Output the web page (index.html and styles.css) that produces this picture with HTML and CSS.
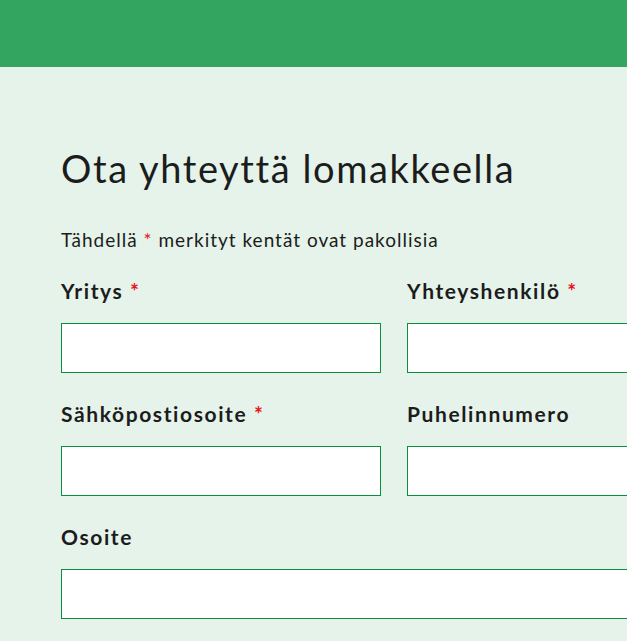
FILE: index.html
```html
<!DOCTYPE html>
<html lang="fi">
<head>
  <meta charset="UTF-8" />
  <meta name="viewport" content="width=device-width, initial-scale=1.0"/>
  <title>Ota yhteyttä</title>
  <link rel="stylesheet" href="styles.css">
</head>
<body>
  <header class="topbar"></header>

  <main class="contact">
    <h1 class="contact-title">Ota yhteyttä lomakkeella</h1>
    <p class="contact-note">Tähdellä <span class="req">*</span> merkityt kentät ovat pakollisia</p>

    <form class="contact-form">
      <div class="field">
        <label for="company">Yritys <span class="req">*</span></label>
        <input type="text" id="company">
      </div>
      <div class="field">
        <label for="person">Yhteyshenkilö <span class="req">*</span></label>
        <input type="text" id="person">
      </div>
      <div class="field">
        <label for="email">Sähköpostiosoite <span class="req">*</span></label>
        <input type="email" id="email">
      </div>
      <div class="field">
        <label for="phone">Puhelinnumero</label>
        <input type="tel" id="phone">
      </div>
      <div class="field field-wide">
        <label for="address">Osoite</label>
        <input type="text" id="address">
      </div>
    </form>
  </main>
</body>
</html>
```

FILE: styles.css
```css
body {
  margin: 0;
  background-color: #e5f3ea;
  color: #1c1c1c;
  font-family: 'Lato', 'Noto Sans', sans-serif;
  overflow: hidden;
}

.topbar {
  height: 67px;
  background-color: #33a561;
}

.contact {
  padding: 78px 0 0 61px;
  width: 666px;
}

.contact-title {
  margin: 0;
  font-size: 38px;
  line-height: 46px;
  font-weight: 400;
  letter-spacing: 1.6px;
}

.contact-note {
  margin: 37px 0 0;
  font-size: 19px;
  line-height: 24px;
  letter-spacing: 1px;
}

.req {
  color: #e8101a;
}

.contact-form {
  display: grid;
  grid-template-columns: 320px 320px;
  column-gap: 26px;
  margin-top: 24px;
}

.field {
  display: flex;
  flex-direction: column;
  margin-bottom: 26px;
}

.field-wide {
  grid-column: 1 / 3;
}

.field label {
  font-size: 21px;
  line-height: 30px;
  font-weight: 700;
  letter-spacing: 1.6px;
  margin-bottom: 17px;
}

.field input {
  height: 50px;
  box-sizing: border-box;
  border: 1px solid #0b8e3a;
  border-radius: 0;
  background-color: #fff;
  padding: 0 12px;
  font-size: 16px;
}
```
